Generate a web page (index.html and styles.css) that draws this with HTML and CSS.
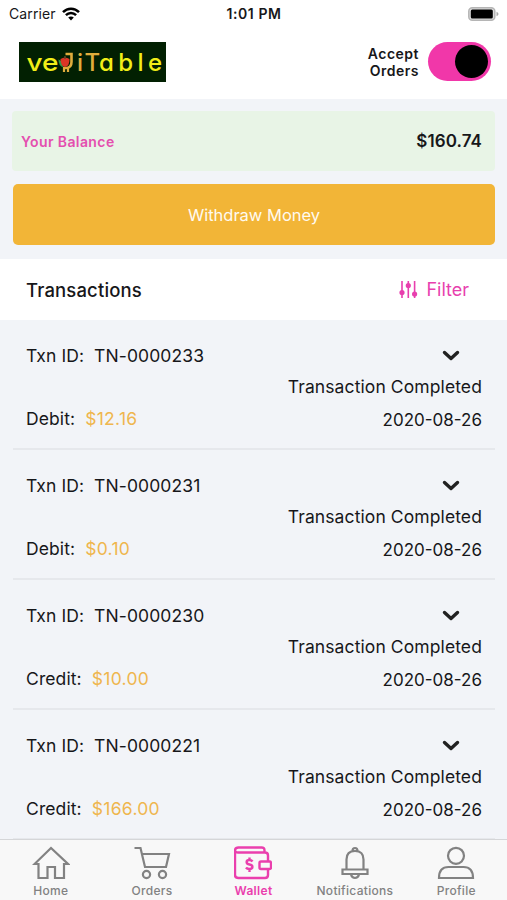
FILE: index.html
```html
<!DOCTYPE html>
<html lang="en">
<head>
    <meta charset="UTF-8">
    <meta name="viewport" content="width=device-width, initial-scale=1.0">
    <title>vegiTable - Wallet</title>
    <link rel="stylesheet" href="styles.css">
</head>
<body>

    <div class="status-bar">
        <div class="carrier">
            <span>Carrier</span>
            <svg width="18" height="14" viewBox="0 0 18 14" fill="none" stroke="#000" stroke-width="2.5">
                <path d="M1 5.2C5.5 .6 12.500 .6 17 5.2M3.900 8.200C6.800 5.300 11.200 5.300 14.100 8.200"/>
                <path d="M6.200 10.500C7.800 9 10.200 9 11.800 10.500L9 13.500z" fill="#000" stroke="none"/>
            </svg>
        </div>
        <span class="time">1:01 PM</span>
        <svg class="battery" width="31" height="14" viewBox="0 0 31 14">
            <rect x=".8" y=".8" width="26" height="12.400" rx="3.500" fill="#ddd" stroke="#b5b5b5" stroke-width="1.500"/>
            <rect x="2.800" y="2.500" width="22" height="9" rx="1.500" fill="#000"/>
            <path d="M28.500 4.800Q30.500 5.500 30.500 7T28.500 9.200z" fill="#aaa"/>
        </svg>
    </div>

    <header class="header">
        <svg class="logo" width="147" height="40" viewBox="0 0 147 40">
            <rect width="147" height="40" fill="#022002"/>
            <g class="logo-text">
                <text x="7.500" y="28.500" textLength="32" lengthAdjust="spacingAndGlyphs" fill="#f2ee18">ve</text>
                <text x="58" y="28.500" fill="#e0ad3c">i</text>
                <text x="65.500" y="28.500" fill="#e0ad3c">T</text>
                <text x="80" y="28.500" textLength="63" fill="#f2ee18">able</text>
            </g>
            <path d="M46.500 12h6V20q0 6-5.500 6h-3" fill="none" stroke="#e0ad3c" stroke-width="2.600"/>
            <path d="M45 26v4M49 25v5" stroke="#e0ad3c" stroke-width="2.200"/>
            <path d="M39.500 17.500q4.500 1 4.500 8-4.500-2-4.500-8z" fill="#2f9a45"/>
            <path d="M41.500 17q4.500-3 9 0 0 7.500-4.500 8-4.500-1-4.500-8z" fill="#dc3525"/>
            <path d="M46 17v-3" stroke="#68442a" stroke-width="1.500"/>
        </svg>
        <div class="accept">
            <span class="accept-label">Accept<br>Orders</span>
            <div class="toggle"><div class="knob"></div></div>
        </div>
    </header>

    <section class="balance-area">
        <div class="balance">
            <span class="balance-label">Your Balance</span>
            <span class="balance-amount">$160.74</span>
        </div>
        <button class="withdraw">Withdraw Money</button>
    </section>

    <div class="title-bar">
        <h2>Transactions</h2>
        <div class="filter">
            <svg width="19" height="19" viewBox="0 0 19 19" fill="#e83fae" stroke="#e83fae" stroke-width="1.600">
                <path d="M3 1v17M9.300 1v17M15.600 1v17"/>
                <circle cx="3" cy="12.500" r="1.800"/>
                <circle cx="9.300" cy="5.500" r="1.800"/>
                <circle cx="15.600" cy="14" r="1.800"/>
            </svg>
            <span>Filter</span>
        </div>
    </div>

    <main class="transactions">
        <div class="txn">
            <div class="txn-left">
                <div class="txn-id"><span>Txn ID:</span><span>TN-0000233</span></div>
                <div class="txn-amount"><span>Debit:</span><span class="money">$12.16</span></div>
            </div>
            <div class="txn-right">
                <svg class="chevron" width="18" height="12" viewBox="0 0 18 12"><path d="M2.500 2.500L9 8.500L15.500 2.500"/></svg>
                <div class="txn-status">Transaction Completed</div>
                <div class="txn-date">2020-08-26</div>
            </div>
        </div>
        <div class="txn">
            <div class="txn-left">
                <div class="txn-id"><span>Txn ID:</span><span>TN-0000231</span></div>
                <div class="txn-amount"><span>Debit:</span><span class="money">$0.10</span></div>
            </div>
            <div class="txn-right">
                <svg class="chevron" width="18" height="12" viewBox="0 0 18 12"><path d="M2.500 2.500L9 8.500L15.500 2.500"/></svg>
                <div class="txn-status">Transaction Completed</div>
                <div class="txn-date">2020-08-26</div>
            </div>
        </div>
        <div class="txn">
            <div class="txn-left">
                <div class="txn-id"><span>Txn ID:</span><span>TN-0000230</span></div>
                <div class="txn-amount"><span>Credit:</span><span class="money">$10.00</span></div>
            </div>
            <div class="txn-right">
                <svg class="chevron" width="18" height="12" viewBox="0 0 18 12"><path d="M2.500 2.500L9 8.500L15.500 2.500"/></svg>
                <div class="txn-status">Transaction Completed</div>
                <div class="txn-date">2020-08-26</div>
            </div>
        </div>
        <div class="txn">
            <div class="txn-left">
                <div class="txn-id"><span>Txn ID:</span><span>TN-0000221</span></div>
                <div class="txn-amount"><span>Credit:</span><span class="money">$166.00</span></div>
            </div>
            <div class="txn-right">
                <svg class="chevron" width="18" height="12" viewBox="0 0 18 12"><path d="M2.500 2.500L9 8.500L15.500 2.500"/></svg>
                <div class="txn-status">Transaction Completed</div>
                <div class="txn-date">2020-08-26</div>
            </div>
        </div>
    </main>

    <nav class="tabs">
        <a class="tab">
            <svg width="38" height="34" viewBox="0 0 38 34">
                <path d="M19 2L2.500 18H6.500V32H15.500V21H23V32H32V18H36z"/>
            </svg>
            <span>Home</span>
        </a>
        <a class="tab">
            <svg width="38" height="34" viewBox="0 0 38 34">
                <path d="M1.500 2H7.500L12 21H33L36 8H9"/>
                <circle cx="13.500" cy="28.500" r="3.600"/>
                <circle cx="29.500" cy="28.500" r="3.600"/>
            </svg>
            <span>Orders</span>
        </a>
        <a class="tab active">
            <svg width="38" height="34" viewBox="0 0 38 34">
                <path d="M30.500 6V4.500Q30.500 1.500 27.500 1.500H4.500Q1 1.500 1 4.500V29Q1 32 4.500 32H31Q34 32 34 29V23M34 15V9.500Q34 6.500 31 6.500H4Q1 6.500 1 4"/>
                <rect x="25.500" y="15.500" width="11.500" height="7.500" rx="1.500"/>
                <path d="M18.500 15.500Q17.500 14 15.500 14C11.800 14 11.500 17.800 15.500 18.500C19.500 19.200 19.300 23 15.500 23Q13 23 12 21.500M15.500 11.500v2.500M15.500 23v3"/>
            </svg>
            <span>Wallet</span>
        </a>
        <a class="tab">
            <svg width="38" height="34" viewBox="0 0 38 34">
                <path d="M10.500 22.500V13.500Q10.500 5 19 5T27.500 13.500V22.500M6.500 23.500H31.500V28H6.500zM16.500 5Q16.500 2 19 2T21.500 5M15 28.500Q16 32 19 32T23 28.500"/>
            </svg>
            <span>Notifications</span>
        </a>
        <a class="tab">
            <svg width="38" height="34" viewBox="0 0 38 34">
                <circle cx="19" cy="9.800" r="8"/>
                <path d="M2 32Q2 21 11.500 21H26.500Q36 21 36 32z"/>
            </svg>
            <span>Profile</span>
        </a>
    </nav>

</body>
</html>
```
FILE: styles.css
```css
* {
    box-sizing: border-box;
}
body {
    margin: 0;
    height: 900px;
    display: flex;
    flex-direction: column;
    overflow: hidden;
    background: #f2f4f8;
    font-family: Inter, "Liberation Sans", sans-serif;
    color: #17171a;
}
svg {
    display: block;
    flex: none;
}
.status-bar {
    height: 27px;
    flex: none;
    display: grid;
    grid-template-columns: 1fr auto 1fr;
    align-items: center;
    padding: 0 8px 0 9px;
    background: #fff;
    font-size: 14px;
    line-height: 27px;
}
.carrier {
    display: flex;
    align-items: center;
    gap: 6px;
    letter-spacing: 0.1px;
}
.time {
    font-weight: 600;
    letter-spacing: 0.6px;
}
.battery {
    justify-self: end;
}
.header {
    height: 72px;
    flex: none;
    display: flex;
    justify-content: space-between;
    align-items: flex-start;
    padding: 15px 16px 0 19px;
    background: #fff;
}
.logo-text {
    font-family: Inter, sans-serif;
    font-size: 24px;
    font-weight: 500;
    font-feature-settings: "cv11";
}
.accept {
    display: flex;
    gap: 9px;
}
.accept-label {
    padding-top: 3px;
    text-align: right;
    font-size: 14px;
    font-weight: 600;
    line-height: 17px;
    letter-spacing: 0.5px;
}
.toggle {
    width: 63px;
    height: 39px;
    padding: 3px;
    display: flex;
    justify-content: flex-end;
    border-radius: 20px;
    background: #f137a9;
}
.knob {
    width: 33px;
    height: 33px;
    border-radius: 50%;
    background: #000;
}
.balance-area {
    height: 160px;
    flex: none;
    padding: 12px 12px 0;
}
.balance {
    height: 60px;
    display: flex;
    justify-content: space-between;
    align-items: center;
    padding: 0 13px 0 9px;
    border-radius: 4px;
    background: #e8f4e6;
}
.balance-label {
    color: #e44faf;
    font-size: 14px;
    font-weight: 600;
    letter-spacing: 0.4px;
}
.balance-amount {
    font-size: 17px;
    font-weight: 600;
    letter-spacing: 0.1px;
}
.withdraw {
    display: block;
    width: 482px;
    height: 61px;
    margin: 13px 0 0 1px;
    padding: 0;
    border: none;
    border-radius: 5px;
    background: #f2b537;
    color: #fffaf0;
    font-family: inherit;
    font-size: 16.5px;
}
.title-bar {
    height: 61px;
    flex: none;
    display: flex;
    justify-content: space-between;
    align-items: center;
    padding: 0 38px 0 26px;
    background: #fff;
}
.title-bar h2 {
    margin: 0;
    font-size: 18.5px;
    font-weight: 500;
    line-height: 22px;
    letter-spacing: 0.15px;
}
.filter {
    display: flex;
    align-items: center;
    gap: 8px;
    color: #e83fae;
    font-size: 18px;
}
.transactions {
    height: 519px;
    flex: none;
    padding: 0 12px 0 13px;
}
.txn {
    height: 130px;
    display: flex;
    justify-content: space-between;
    padding: 0 13px;
    border-bottom: 2px solid #e6e8ec;
    font-size: 17.5px;
    line-height: 24px;
}
.txn-id, .txn-amount {
    display: flex;
    gap: 10px;
}
.txn-id {
    padding-top: 24px;
    letter-spacing: 0.1px;
}
.txn-amount {
    padding-top: 39px;
    letter-spacing: 0.1px;
}
.money {
    color: #efb64e;
    letter-spacing: 0.3px;
}
.txn-right {
    display: flex;
    flex-direction: column;
    align-items: flex-end;
}
.chevron {
    margin: 30px 22px 13px 0;
    fill: none;
    stroke: #222;
    stroke-width: 3.4;
    stroke-linejoin: round;
    stroke-linecap: round;
}
.txn-status {
    letter-spacing: 0.1px;
}
.txn-date {
    margin-top: 9px;
    font-size: 17px;
}
.tabs {
    height: 61px;
    flex: none;
    display: grid;
    grid-template-columns: repeat(5, 1fr);
    border-top: 1px solid #d5d6d8;
    background: #f8f8f8;
}
.tab {
    display: flex;
    flex-direction: column;
    align-items: center;
    padding-top: 6px;
    color: #828282;
    font-size: 12px;
    font-weight: 500;
    line-height: 16px;
    letter-spacing: 0.3px;
}
.tab svg {
    margin-bottom: 3px;
    fill: none;
    stroke: currentColor;
    stroke-width: 2.2;
}
.active {
    color: #ea3fad;
    font-weight: 600;
}
.active svg {
    stroke-width: 2.4;
}
```
